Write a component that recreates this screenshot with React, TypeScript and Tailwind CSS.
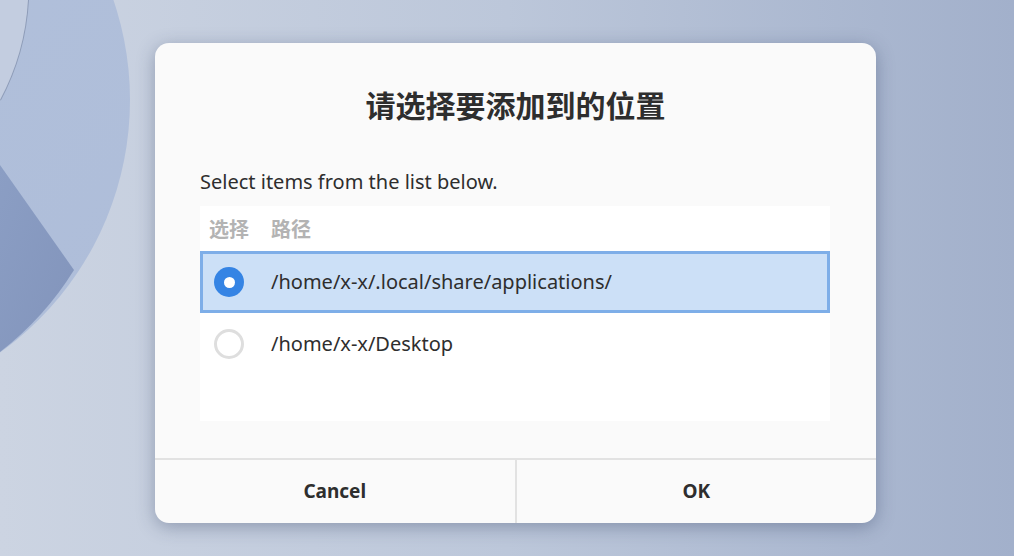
import React from 'react';

const paths = [
  { path: '/home/x-x/.local/share/applications/', checked: true },
  { path: '/home/x-x/Desktop', checked: false },
];

function Radio({ checked }: { checked: boolean }) {
  if (checked) {
    return (
      <div className="w-[30px] h-[30px] rounded-full bg-[#3584e4] flex items-center justify-center">
        <div className="w-[11px] h-[11px] rounded-full bg-white" />
      </div>
    );
  }
  return <div className="w-[30px] h-[30px] rounded-full border-[3px] border-[#dedede] bg-white" />;
}

export default function App() {
  return (
    <div
      className="relative w-[1014px] h-[556px] overflow-hidden bg-gradient-to-r from-[#ccd4e2] via-[#bcc7da] to-[#a2b0cb]"
      style={{ fontFamily: '"Noto Sans", "Noto Sans CJK SC", sans-serif' }}
    >
      {/* Wallpaper shapes */}
      <svg className="absolute inset-0" width="1014" height="556" viewBox="0 0 1014 556">
        <defs>
          <linearGradient id="disc" x1="0" y1="0" x2="1" y2="1">
            <stop offset="0" stopColor="#b3c2dc" />
            <stop offset="1" stopColor="#aebdd9" />
          </linearGradient>
          <linearGradient id="wedge" x1="0" y1="0" x2="1" y2="1">
            <stop offset="0" stopColor="#8b9ec4" />
            <stop offset="1" stopColor="#8294bb" />
          </linearGradient>
        </defs>
        <circle cx="-180" cy="100" r="310" fill="url(#disc)" />
        <path d="M0 165 L74 270 A310 310 0 0 1 0 352 Z" fill="url(#wedge)" />
        <path d="M28 0 A240 240 0 0 1 0 100" fill="none" stroke="#8e9cb8" strokeWidth="2" />
        <path d="M0 0 L28 0 A240 240 0 0 1 0 100 Z" fill="#c3cde0" />
      </svg>

      <div className="relative flex pt-[43px] pl-[155px]">
        <div className="w-[721px] h-[480px] rounded-[14px] bg-[#fafafa] shadow-[0_4px_18px_rgba(40,55,90,0.35)] flex flex-col overflow-hidden">
          <div className="pt-[42px] h-[123px] text-center">
            <h1
              className="text-[30px] leading-[38px] font-bold text-[#2e2e2e]"
              style={{ fontFamily: '"Noto Sans CJK SC", sans-serif' }}
            >
              请选择要添加到的位置
            </h1>
          </div>

          <div className="px-[45px] flex-1 flex flex-col">
            <p className="text-[20px] leading-[30px] text-[#2e2e2e] mt-[1px]">Select items from the list below.</p>
            <div className="mt-[9px] w-[630px] h-[215px] bg-white">
              <div
                className="flex items-center h-[45px] text-[20px] text-[#b3b3b3] font-bold"
                style={{ fontFamily: '"Noto Sans CJK SC", sans-serif' }}
              >
                <span className="w-[71px] pl-[9px]">选择</span>
                <span>路径</span>
              </div>
              {paths.map((p) => (
                <div
                  key={p.path}
                  className={
                    p.checked
                      ? 'flex items-center h-[62px] border-[3px] border-[#7eaee8] bg-[#cce0f7]'
                      : 'flex items-center h-[62px] border-[3px] border-transparent'
                  }
                >
                  <div className="w-[68px] pl-[11px]">
                    <Radio checked={p.checked} />
                  </div>
                  <span className="text-[20px] text-[#2e2e2e]">{p.path}</span>
                </div>
              ))}
            </div>
          </div>

          <div className="h-[65px] border-t-2 border-[#e2e2e2] flex">
            <button className="flex-1 border-r-2 border-[#e2e2e2] text-[19px] font-bold text-[#2e2e2e]">Cancel</button>
            <button className="flex-1 text-[19px] font-bold text-[#2e2e2e]">OK</button>
          </div>
        </div>
      </div>
    </div>
  );
}
